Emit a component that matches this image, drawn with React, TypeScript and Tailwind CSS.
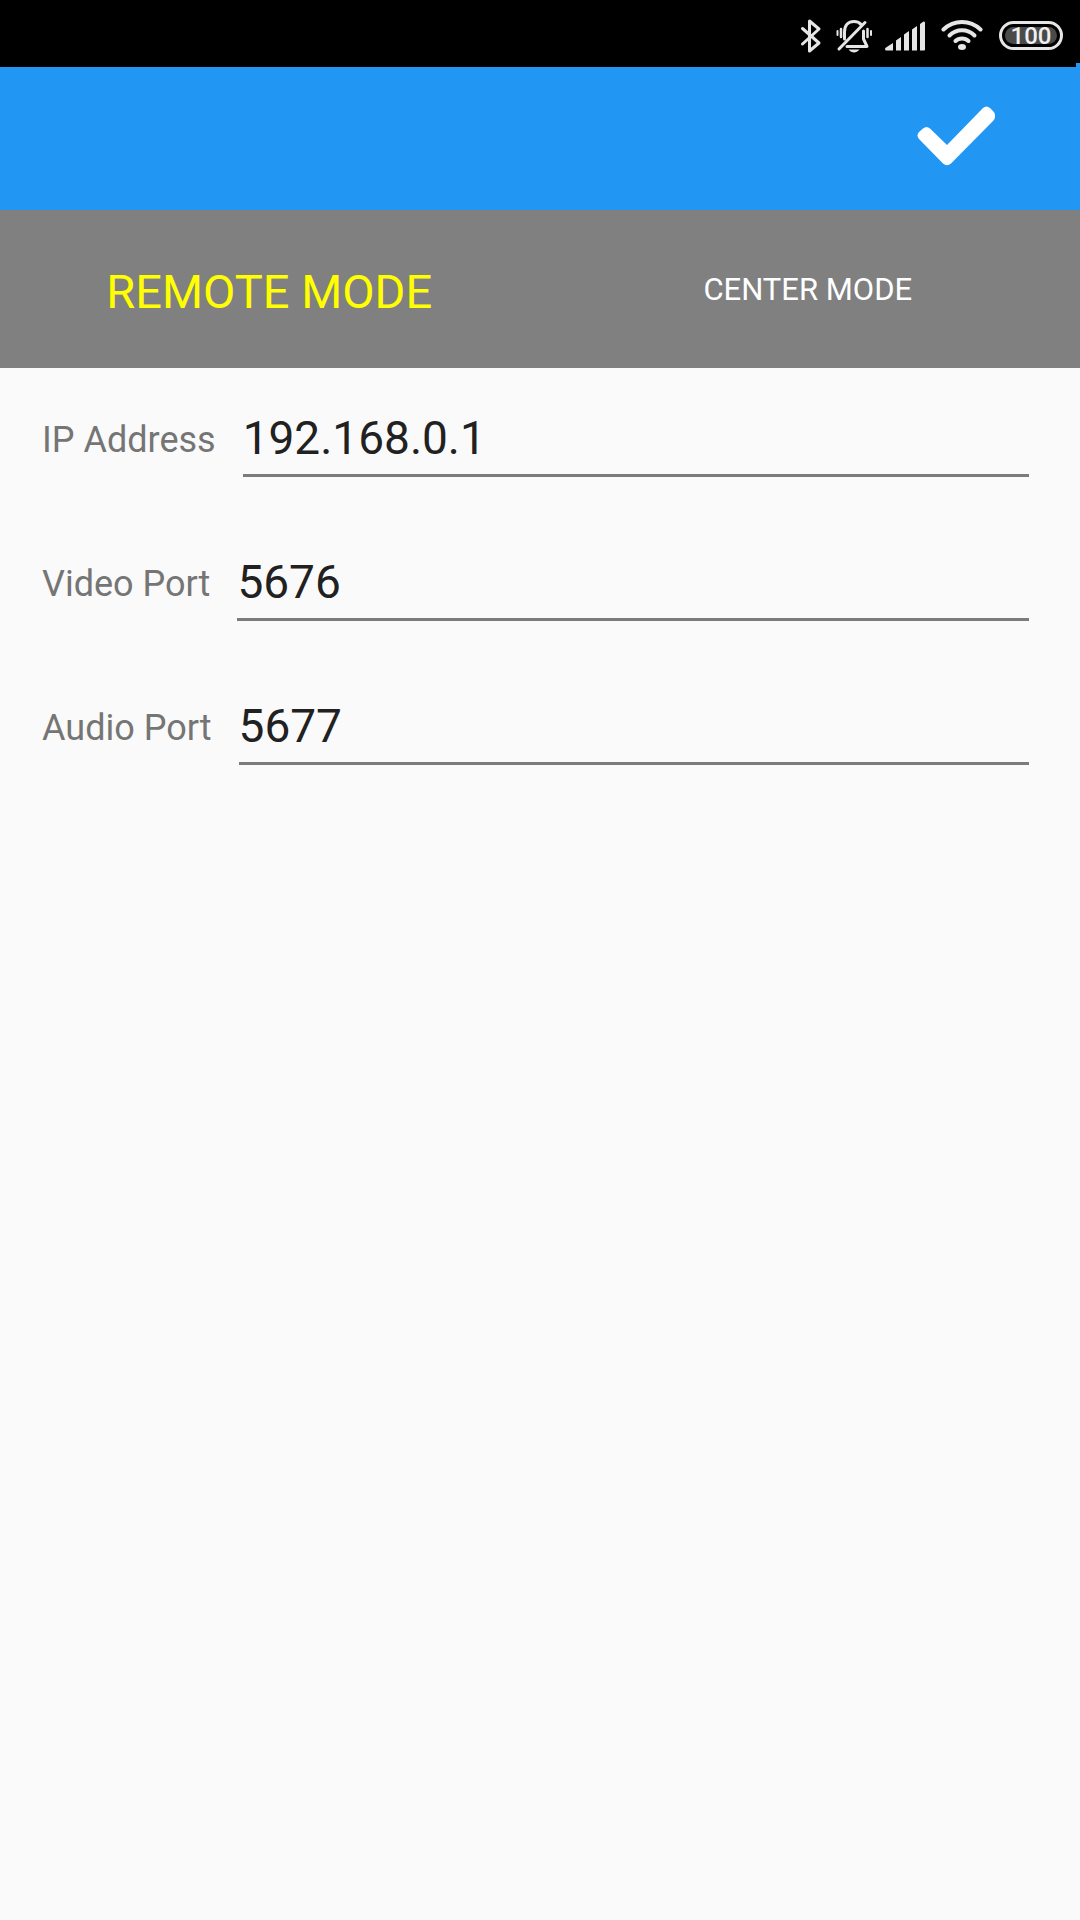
import { useState } from "react";

const BluetoothIcon = () => (
    <svg width="22" height="36" viewBox="0 0 22 36" fill="none" stroke="#e6e6e6" strokeWidth="3" strokeLinejoin="round" strokeLinecap="round">
        <path d="M2.500 10.500L19 25L9.500 33V3L19 11L2.500 26" />
    </svg>
);

const MutedBellIcon = () => (
    <svg width="36" height="36" viewBox="0 0 36 36" fill="none" stroke="#e6e6e6" strokeWidth="3" strokeLinecap="round">
        <path d="M8.500 21V14C8.500 7 12.500 3.500 18 3.500C21 3.500 23.500 4.500 25 6.500" />
        <path d="M27.500 13V21L31 28.500H11" strokeLinejoin="round" />
        <path d="M3 31L29 4.500" />
        <path d="M12.500 31.500H23.500C22 33.500 20 34.500 18 34.500S14 33.500 12.500 31.500Z" fill="#e6e6e6" stroke="none" />
        <path d="M5 11V19M31.500 11V19" strokeWidth="2.500" />
        <path d="M1.500 13V17M35 13V17" strokeWidth="2" />
    </svg>
);

const SignalIcon = () => (
    <svg width="41" height="30" viewBox="0 0 41 30" fill="#e6e6e6">
        <path d="M0 28Q0 27 1 26.500L8 22V29.500H1.500Q0 29.500 0 28Z" />
        <path d="M11 19.500L16 16V29.500H11Z" />
        <path d="M19 13.500L24 10V29.500H19Z" />
        <path d="M27 8.500L32 5V29.500H27Z" />
        <path d="M35 3L38.500 0.500Q40 0 40 2V28.500Q40 29.500 39 29.500H35Z" />
    </svg>
);

const WifiIcon = () => (
    <svg width="42" height="31" viewBox="0 0 42 31" fill="none" stroke="#e6e6e6" strokeWidth="4" strokeLinecap="round">
        <path d="M2.500 9.500C13 -0.500 29 -0.500 39.500 9.500" />
        <path d="M8.500 15.500C15.500 8.500 26.500 8.500 33.500 15.500" />
        <path d="M14.500 21C18 17.500 24 17.500 27.500 21" />
        <ellipse cx="21" cy="27" rx="4" ry="3" fill="#e6e6e6" stroke="none" />
    </svg>
);

const CheckIcon = () => (
    <svg width="78" height="60" viewBox="0 0 78 60" fill="#fff">
        <path d="M6 22.500Q9.500 19.500 13 22.500L30 39L66 2Q69.500 -1 73 2L76 5Q78 7 78 9V11Q78 13 76 15L34 57.500Q30 61 26 57.500L2 33Q-1 29.500 2 26Z" />
    </svg>
);

const StatusBar = () => (
    <div className="relative flex h-[67px] items-center justify-end bg-black pt-1 pr-[17px]">
        <div className="flex items-center">
            <BluetoothIcon />
            <div className="ml-[14px]"><MutedBellIcon /></div>
            <div className="ml-[13px]"><SignalIcon /></div>
            <div className="ml-[15px]"><WifiIcon /></div>
            <div className="ml-4 flex h-[29px] w-16 rounded-full border-[3px] border-[#e6e6e6] p-[3px]">
                <div className="flex flex-1 items-center justify-center rounded-full bg-[#4a4a4a] text-[24px] leading-none font-medium text-[#f0f0f0]">
                    100
                </div>
            </div>
        </div>
        <div className="absolute right-0 bottom-0 h-1 w-1 bg-[#2196f3]" />
    </div>
);

type FieldProps = { id: string; label: string; initial: string };

const Field = ({ id, label, initial }: FieldProps) => {
    const [value, setValue] = useState(initial);
    return (
        <div className="flex items-start gap-[27px]">
            <label htmlFor={id} className="text-[36px] leading-[60px] whitespace-nowrap text-[#757575]">{label}</label>
            <input
                id={id}
                type="text"
                value={value}
                onChange={(e) => setValue(e.target.value)}
                className="h-[67px] min-w-0 flex-1 border-b-[3px] border-[#7b7b7b] bg-transparent pb-2 text-[46px] leading-[56px] text-[#212121] outline-none"
            />
        </div>
    );
};

export default function App() {
    const [mode, setMode] = useState("remote");
    const active = "text-[47px] leading-[56px] text-[#ffff00]";
    const idle = "text-[31px] leading-[52px] text-white";

    return (
        <div className="min-h-screen bg-[#fafafa] font-[Roboto,sans-serif]">
            <StatusBar />
            <header className="flex h-[143px] items-center justify-end bg-[#2196f3] pr-[85px] pb-[5px]">
                <button type="button" aria-label="Save">
                    <CheckIcon />
                </button>
            </header>
            <nav className="flex h-[158px] items-start bg-[#808080] pt-[54px] pr-[3px]">
                <button type="button" onClick={() => setMode("remote")} className={`flex-1 ${mode === "remote" ? active : idle}`}>
                    REMOTE MODE
                </button>
                <button type="button" onClick={() => setMode("center")} className={`flex-1 ${mode === "center" ? active : idle}`}>
                    CENTER MODE
                </button>
            </nav>
            <main className="flex flex-col gap-[77px] pt-[42px] pr-[51px] pl-[42px]">
                <Field id="ip" label="IP Address" initial="192.168.0.1" />
                <Field id="video" label="Video Port" initial="5676" />
                <Field id="audio" label="Audio Port" initial="5677" />
            </main>
        </div>
    );
}
